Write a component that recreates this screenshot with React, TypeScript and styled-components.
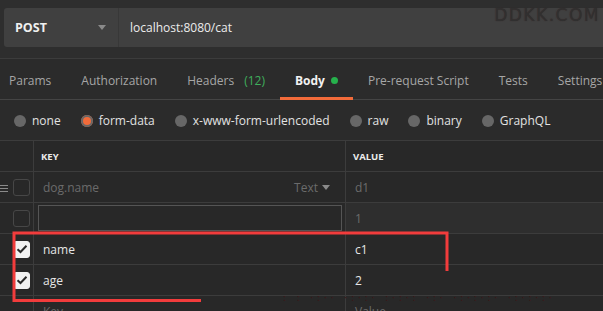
import styled, { createGlobalStyle } from "styled-components";

const GlobalStyle = createGlobalStyle`
  html, body {
    margin: 0;
    padding: 0;
    background: #2b2b2b;
  }
  * {
    box-sizing: border-box;
  }
`;

const Page = styled.div`
  position: relative;
  width: 603px;
  height: 311px;
  overflow: hidden;
  background: #2b2b2b;
  font-family: "Open Sans", "Liberation Sans", sans-serif;
  font-size: 12px;
  color: #e4e4e4;
`;

const TopArea = styled.div`
  height: 59px;
  padding: 8px 0 0 4px;
  background: #2e2e2e;
  border-bottom: 1px solid #3c3c3c;
`;

const UrlBar = styled.div`
  display: flex;
  height: 39px;
  background: #404040;
  border-radius: 3px 0 0 3px;
`;

const MethodSelect = styled.div`
  width: 115px;
  display: flex;
  align-items: center;
  justify-content: space-between;
  padding: 0 12px 0 11px;
  border-right: 1px solid #383838;
  font-weight: 700;
  font-size: 12.5px;
  color: #f0f0f0;
`;

const Caret = styled.span`
  width: 0;
  height: 0;
  border-left: 4px solid transparent;
  border-right: 4px solid transparent;
  border-top: 5px solid #8a8a8a;
`;

const UrlText = styled.div`
  display: flex;
  align-items: center;
  padding-left: 11px;
  color: #ececec;
`;

const Watermark = styled.div`
  position: absolute;
  top: 5px;
  right: 3px;
  font-family: "DejaVu Sans", sans-serif;
  font-size: 17px;
  letter-spacing: 1.5px;
  color: #303030;
  text-shadow: 0 0 1px #3a2626;
`;

const Tabs = styled.div`
  display: flex;
  height: 41px;
  margin-left: -6px;
  border-bottom: 1px solid #444;
`;

const Tab = styled.div<{ $active?: boolean }>`
  display: flex;
  align-items: center;
  gap: 6px;
  padding: 5px 15px 0;
  white-space: nowrap;
  color: ${(p) => (p.$active ? "#f2f2f2" : "#a6a6a6")};
  font-weight: ${(p) => (p.$active ? 700 : 400)};
  border-bottom: 3px solid ${(p) => (p.$active ? "#f26b3a" : "transparent")};
  margin-bottom: -1px;
`;

const Count = styled.span`
  color: #3fae5c;
  margin-left: 4px;
`;

const Dot = styled.span`
  width: 7px;
  height: 7px;
  border-radius: 50%;
  background: #26b14c;
`;

const RadioRow = styled.div`
  display: flex;
  align-items: center;
  height: 40px;
  padding: 1px 0 0 14px;
  gap: 20px;
`;

const RadioItem = styled.div`
  display: flex;
  align-items: center;
  gap: 6px;
  color: #e2e2e2;
`;

const RadioCircle = styled.span<{ $checked?: boolean }>`
  width: 12px;
  height: 12px;
  border-radius: 50%;
  background: ${(p) => (p.$checked ? "#f26b3a" : "#676767")};
  box-shadow: ${(p) => (p.$checked ? "0 0 0 2px #676767 inset" : "none")};
`;

const Table = styled.div`
  display: grid;
  grid-template-columns: 34px 312px 1fr;
  background: #282828;
  border-top: 1px solid #3c3c3c;
`;

const Cell = styled.div<{ $light?: boolean }>`
  height: 31px;
  display: flex;
  align-items: center;
  border-bottom: 1px solid #3c3c3c;
  border-right: 1px solid #3c3c3c;
  padding-left: 7px;
  background: ${(p) => (p.$light ? "#2e2e2e" : "transparent")};
`;

const CheckCell = styled(Cell)`
  position: relative;
  padding-left: 13px;
`;

const KeyCell = styled(Cell)`
  justify-content: space-between;
  padding-right: 15px;
`;

const ValueCell = styled(Cell)`
  border-right: none;
`;

const HeadLabel = styled.span`
  font-size: 9.5px;
  font-weight: 700;
  color: #ececec;
`;

const Placeholder = styled.span`
  color: #6b6b6b;
  padding-left: 2px;
`;

const Filled = styled.span`
  color: #e6e6e6;
  padding-left: 2px;
`;

const TypeSelect = styled.span`
  display: flex;
  align-items: center;
  gap: 4px;
  color: #6b6b6b;
`;

const SmallCaret = styled(Caret)`
  border-top-color: #8a8a8a;
`;

const KeyInput = styled.div`
  width: 304px;
  height: 26px;
  margin-left: -3px;
  border: 1px solid #555;
`;

const Box = styled.span<{ $checked?: boolean }>`
  width: 17px;
  height: 17px;
  border-radius: 3px;
  border: 1px solid ${(p) => (p.$checked ? "#f2f2f2" : "#474747")};
  background: ${(p) => (p.$checked ? "#f2f2f2" : "transparent")};
  display: flex;
  align-items: center;
  justify-content: center;
`;

const Handle = styled.span`
  position: absolute;
  left: 0;
  top: 13px;
  width: 8px;
  height: 7px;
  border-top: 1px solid #8a8a8a;
  border-bottom: 1px solid #8a8a8a;
  &::after {
    content: "";
    position: absolute;
    left: 0;
    right: 0;
    top: 2px;
    border-top: 1px solid #8a8a8a;
  }
`;

const Annotation = styled.svg`
  position: absolute;
  left: 0;
  top: 0;
  pointer-events: none;
`;

const Noise = styled.div`
  position: absolute;
  left: 282px;
  top: 294px;
  font-family: "DejaVu Sans Mono", monospace;
  font-size: 8px;
  letter-spacing: 2px;
  color: #3e1616;
  white-space: nowrap;
`;

function Check({ checked }: { checked?: boolean }) {
  return (
    <Box $checked={checked}>
      {checked && (
        <svg width="12" height="10" viewBox="0 0 12 10">
          <path d="M1.5 5.2 L4.5 8 L10.5 1.8" fill="none" stroke="#2a2a2a" strokeWidth="2" />
        </svg>
      )}
    </Box>
  );
}

const tabs = ["Params", "Authorization", "Headers", "Body", "Pre-request Script", "Tests", "Settings"];
const radios = ["none", "form-data", "x-www-form-urlencoded", "raw", "binary", "GraphQL"];

export default function App() {
  return (
    <Page>
      <GlobalStyle />
      <TopArea>
        <UrlBar>
          <MethodSelect>
            POST
            <Caret />
          </MethodSelect>
          <UrlText>localhost:8080/cat</UrlText>
        </UrlBar>
      </TopArea>
      <Watermark>DDKK.COM</Watermark>

      <Tabs>
        {tabs.map((t) => (
          <Tab key={t} $active={t === "Body"}>
            {t}
            {t === "Headers" && <Count>(12)</Count>}
            {t === "Body" && <Dot />}
          </Tab>
        ))}
      </Tabs>

      <RadioRow>
        {radios.map((r) => (
          <RadioItem key={r}>
            <RadioCircle $checked={r === "form-data"} />
            {r}
          </RadioItem>
        ))}
      </RadioRow>

      <Table>
        <Cell />
        <Cell>
          <HeadLabel>KEY</HeadLabel>
        </Cell>
        <ValueCell>
          <HeadLabel>VALUE</HeadLabel>
        </ValueCell>

        <CheckCell>
          <Handle />
          <Check />
        </CheckCell>
        <KeyCell>
          <Placeholder>dog.name</Placeholder>
          <TypeSelect>
            Text <SmallCaret />
          </TypeSelect>
        </KeyCell>
        <ValueCell>
          <Placeholder>d1</Placeholder>
        </ValueCell>

        <CheckCell>
          <Check />
        </CheckCell>
        <Cell>
          <KeyInput />
        </Cell>
        <ValueCell $light>
          <Placeholder>1</Placeholder>
        </ValueCell>

        <CheckCell>
          <Check checked />
        </CheckCell>
        <Cell>
          <Filled>name</Filled>
        </Cell>
        <ValueCell>
          <Filled>c1</Filled>
        </ValueCell>

        <CheckCell>
          <Check checked />
        </CheckCell>
        <Cell>
          <Filled>age</Filled>
        </Cell>
        <ValueCell>
          <Filled>2</Filled>
        </ValueCell>

        <CheckCell />
        <Cell>
          <Placeholder>Key</Placeholder>
        </Cell>
        <ValueCell>
          <Placeholder>Value</Placeholder>
        </ValueCell>
      </Table>

      <Noise>: : ·:·· ·:·:·  :·:·: ·:·  ·:·:·:· ·:·:·:·</Noise>

      <Annotation width="603" height="311">
        <polyline
          points="447,271 447,233 14,233 14,300.5 201,300.5"
          fill="none"
          stroke="#f23c3c"
          strokeWidth="3"
        />
      </Annotation>
    </Page>
  );
}
